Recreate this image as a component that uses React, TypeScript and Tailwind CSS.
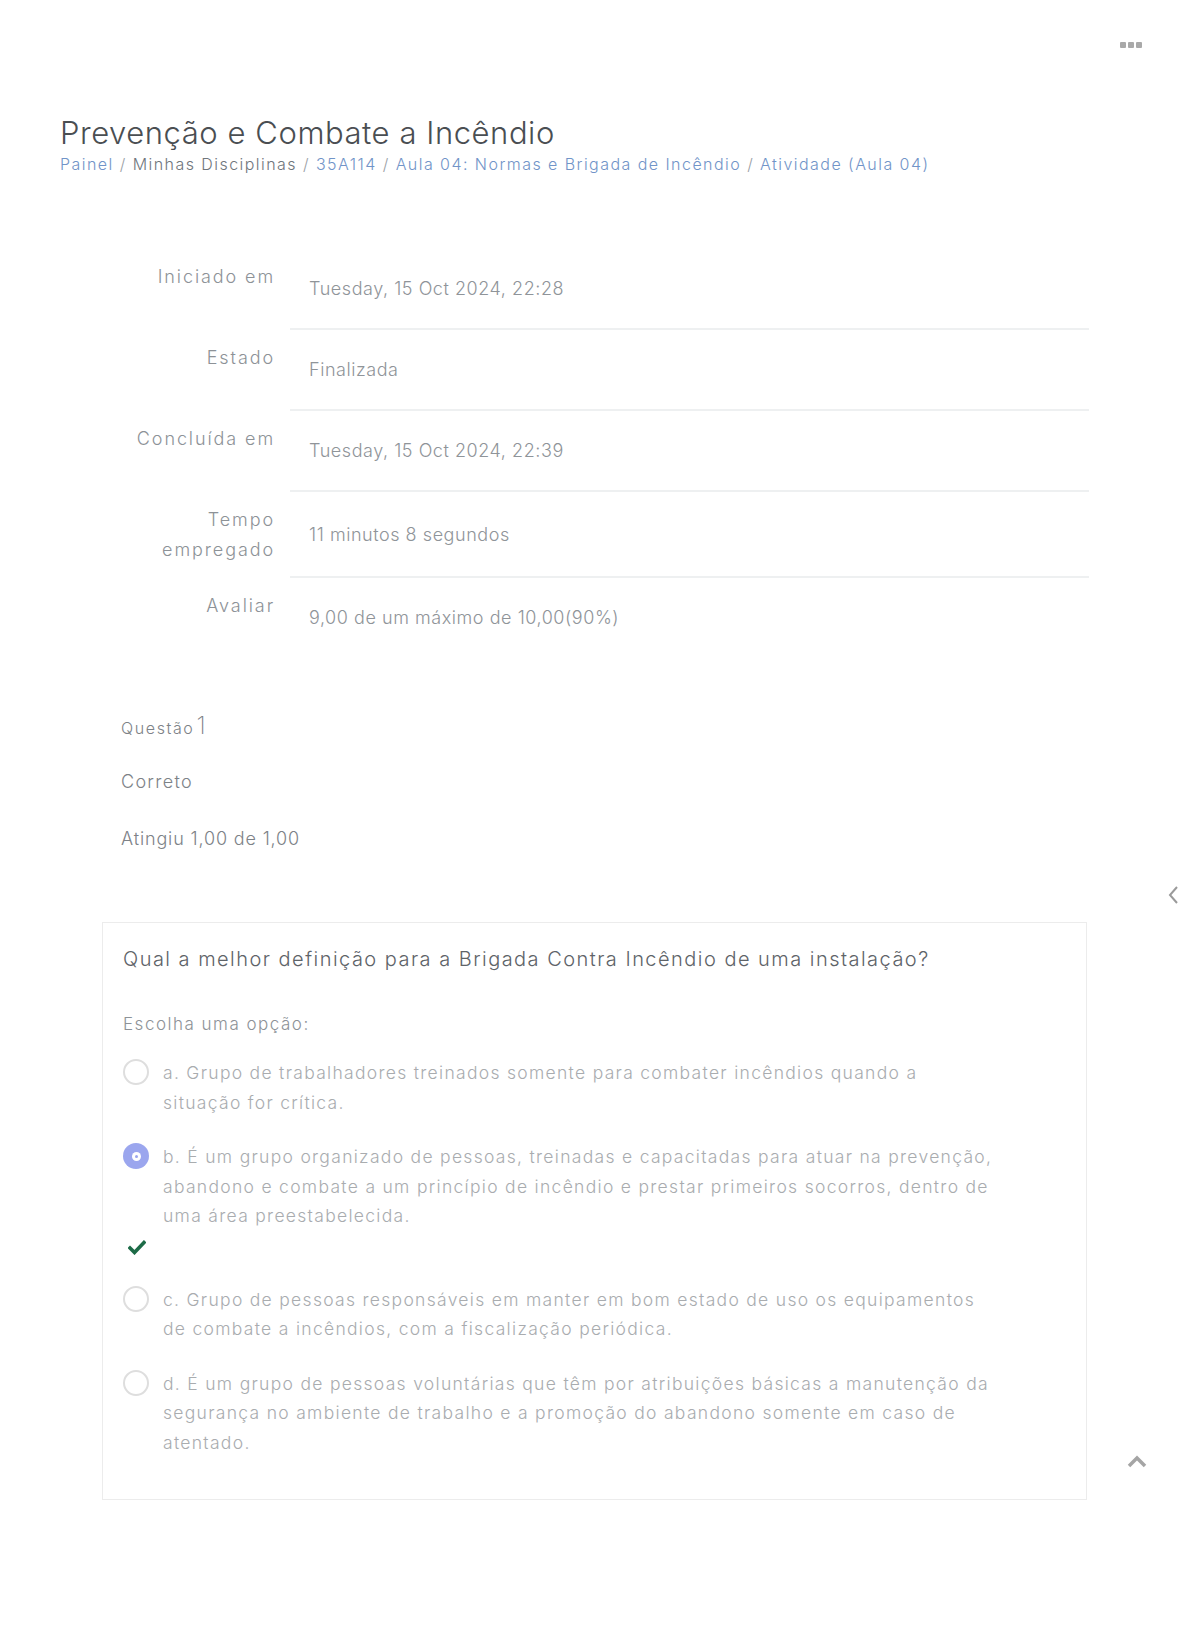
import React from "react";

const font = { fontFamily: 'Inter, "Open Sans", "Liberation Sans", sans-serif' };

type Row = { label: string[]; value: string };

const rows: Row[] = [
  { label: ["Iniciado em"], value: "Tuesday, 15 Oct 2024, 22:28" },
  { label: ["Estado"], value: "Finalizada" },
  { label: ["Concluída em"], value: "Tuesday, 15 Oct 2024, 22:39" },
  { label: ["Tempo", "empregado"], value: "11 minutos 8 segundos" },
  { label: ["Avaliar"], value: "9,00 de um máximo de 10,00(90%)" },
];

const options = [
  {
    key: "a",
    text: "a. Grupo de trabalhadores treinados somente para combater incêndios quando a situação for crítica.",
    checked: false,
  },
  {
    key: "b",
    text: "b. É um grupo organizado de pessoas, treinadas e capacitadas para atuar na prevenção, abandono e combate a um princípio de incêndio e prestar primeiros socorros, dentro de uma área preestabelecida.",
    checked: true,
  },
  {
    key: "c",
    text: "c. Grupo de pessoas responsáveis em manter em bom estado de uso os equipamentos de combate a incêndios, com a fiscalização periódica.",
    checked: false,
  },
  {
    key: "d",
    text: "d. É um grupo de pessoas voluntárias que têm por atribuições básicas a manutenção da segurança no ambiente de trabalho e a promoção do abandono somente em caso de atentado.",
    checked: false,
  },
];

function Radio({ checked }: { checked: boolean }) {
  if (checked) {
    return (
      <span className="flex h-[26px] w-[26px] shrink-0 items-center justify-center rounded-full bg-[#9ba6ee]">
        <span className="flex h-[9px] w-[9px] items-center justify-center rounded-full bg-white">
          <span className="block h-[3px] w-[3px] rounded-full bg-[#9ba6ee]" />
        </span>
      </span>
    );
  }
  return <span className="block h-[26px] w-[26px] shrink-0 rounded-full border-2 border-[#dedede] bg-white" />;
}

function CheckMark() {
  return (
    <svg width="18" height="15" viewBox="0 0 18 15" className="block">
      <path d="M2 8 L6.5 12.5 L16 2.5" fill="none" stroke="#1d6b47" strokeWidth="3.6" strokeLinecap="square" />
    </svg>
  );
}

export default function App() {
  return (
    <div className="relative min-h-[1627px] w-full bg-white font-light" style={font}>
      {/* header actions menu */}
      <div className="flex justify-end pr-[48px] pt-[42px]">
        <div className="flex gap-[2px]">
          <span className="block h-[6px] w-[6px] rounded-[1px] bg-[#a9a9a9]" />
          <span className="block h-[6px] w-[6px] rounded-[1px] bg-[#a9a9a9]" />
          <span className="block h-[6px] w-[6px] rounded-[1px] bg-[#a9a9a9]" />
        </div>
      </div>

      {/* page header */}
      <div className="px-[60px] pt-[67px]">
        <h1 className="text-[31px] leading-[36px] tracking-[0.55px] text-[#4a4e52]">
          Prevenção e Combate a Incêndio
        </h1>
        <nav className="mt-[1px] text-[16px] leading-[24px] tracking-[1.45px] text-[#70767c]">
          <a className="text-[#7194c8]">Painel</a>
          <span className="text-[#9aa0a6]"> / </span>
          <span>Minhas Disciplinas</span>
          <span className="text-[#9aa0a6]"> / </span>
          <a className="text-[#7194c8]">35A114</a>
          <span className="text-[#9aa0a6]"> / </span>
          <a className="text-[#7194c8]">Aula 04: Normas e Brigada de Incêndio</a>
          <span className="text-[#9aa0a6]"> / </span>
          <a className="text-[#7194c8]">Atividade (Aula 04)</a>
        </nav>
      </div>

      {/* attempt summary */}
      <div className="ml-[102px] mr-[101px] mt-[73px]">
        {rows.map((r) => (
          <div key={r.value} className="flex">
            <div className="w-[188px] shrink-0 self-start py-[13px] pr-[15px] text-right text-[18px] leading-[30px] tracking-[1.9px] text-[#8d9297]">
              {r.label.map((l) => (
                <div key={l}>{l}</div>
              ))}
            </div>
            <div
              className={
                "flex flex-1 items-center py-[26px] pl-[19px] text-[18px] leading-[27px] tracking-[0.55px] text-[#8f9499] " +
                (r.label[0] === "Avaliar" ? "" : "border-b-2 border-[#eef0f1]")
              }
            >
              {r.value}
            </div>
          </div>
        ))}
      </div>

      {/* question info */}
      <div className="ml-[121px] mt-[55px] text-[#7d8287]">
        <div className="flex items-baseline text-[16px] tracking-[1.6px]">
          Questão<span className="ml-[2px] text-[24px] font-extralight leading-[28px]">1</span>
        </div>
        <div className="mt-[28px] text-[18px] leading-[28px] tracking-[1.3px]">Correto</div>
        <div className="mt-[29px] text-[18px] leading-[28px] tracking-[0.85px]">Atingiu 1,00 de 1,00</div>
      </div>

      {/* question card */}
      <div className="ml-[102px] mr-[103px] mt-[69px] border border-[#ececec] pb-[17px] pl-[20px] pr-[20px] pt-[21px]">
        <div className="text-[20px] leading-[30px] tracking-[1.47px] text-[#5e6368]">
          Qual a melhor definição para a Brigada Contra Incêndio de uma instalação?
        </div>
        <div className="mt-[38px] text-[17px] leading-[24px] tracking-[1.5px] text-[#8d9297]">Escolha uma opção:</div>
        <div className="mt-[22px] flex flex-col">
          {options.map((o) => (
            <div key={o.key} className="mb-[25px]">
              <div className="flex items-start gap-[14px]">
                <div className="pt-[1px]">
                  <Radio checked={o.checked} />
                </div>
                <div className="max-w-[838px] text-[17.5px] leading-[29.5px] tracking-[1.3px] text-[#a9acaf]">
                  {o.text}
                </div>
              </div>
              {o.checked && (
                <div className="ml-[5px] mt-[9px] mb-[5px]">
                  <CheckMark />
                </div>
              )}
            </div>
          ))}
        </div>
      </div>

      {/* side navigation controls */}
      <div className="absolute right-[10px] top-[884px]">
        <svg width="14" height="22" viewBox="0 0 14 22">
          <path d="M11 3 L4 11 L11 19" fill="none" stroke="#9a9a9a" strokeWidth="2" />
        </svg>
      </div>
      <div className="absolute right-[42px] top-[1455px]">
        <svg width="22" height="14" viewBox="0 0 22 14">
          <path d="M3 11 L11 3 L19 11" fill="none" stroke="#a5a5a5" strokeWidth="3.5" />
        </svg>
      </div>
    </div>
  );
}
